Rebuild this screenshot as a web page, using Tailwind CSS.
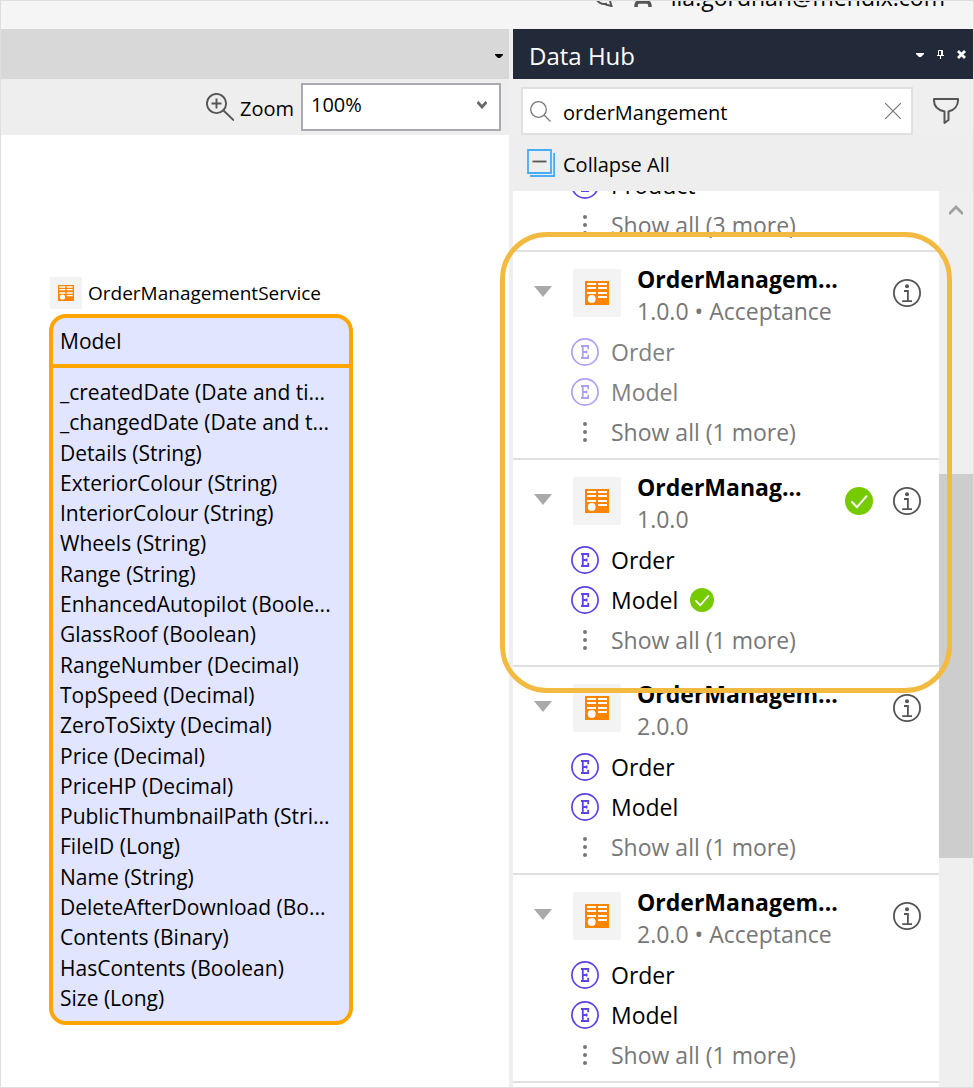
<!DOCTYPE html>
<html lang="en">
<head>
<meta charset="utf-8">
<meta name="viewport" content="width=device-width, initial-scale=1">
<title>Data Hub</title>
<script src="https://cdn.jsdelivr.net/npm/@tailwindcss/browser@4"></script>
</head>
<body class="flex h-screen flex-col overflow-hidden border border-[#dedede] bg-white font-['Open_Sans','Noto_Sans',sans-serif] text-black">

<!-- Shared icons -->
<svg class="hidden" aria-hidden="true">
  <symbol id="service" viewBox="0 0 24 24">
    <path fill="#ff8500" d="M0 0h24v24H0z"/>
    <path fill="#fff" d="M2 2h9v2H2zM13 2h9v2h-9zM2 6h9v2H2zM13 6h9v2h-9zM2 11h9v2H2zM13 11h9v2h-9zM13 15h9v2h-9z"/>
    <circle cx="6.7" cy="18" r="3.9" fill="#fff"/>
  </symbol>
  <symbol id="entity" viewBox="0 0 28 28">
    <circle cx="14" cy="14" r="13.1" fill="none" stroke="currentColor" stroke-width="1.7"/>
    <path fill="none" stroke="currentColor" stroke-width="1.8" d="M10 8h7.200v3.200M10 20h7.200v-3.200M11.800 8v12M12 14h4.200M15.600 12.400v3.200"/>
  </symbol>
  <symbol id="dots" viewBox="0 0 4 20">
    <circle cx="2" cy="2" r="2"/><circle cx="2" cy="10" r="2"/><circle cx="2" cy="18" r="2"/>
  </symbol>
  <symbol id="info" viewBox="0 0 28 28">
    <circle cx="14" cy="14" r="13.1" fill="none" stroke="currentColor" stroke-width="1.8"/>
    <circle cx="14" cy="7.2" r="2" fill="currentColor"/>
    <path fill="none" stroke="currentColor" stroke-width="1.8" d="M11 12h3.9v10M9.2 22.2h9.8"/>
  </symbol>
  <symbol id="check" viewBox="0 0 28 28">
    <circle cx="14" cy="14" r="14" fill="#76cb00"/>
    <path fill="none" stroke="#fff" stroke-width="2" stroke-linecap="round" stroke-linejoin="round" d="M7 15l5 5.2 9.5-11"/>
  </symbol>
  <symbol id="arrow" viewBox="0 0 18 11"><path fill="#a9a9a9" d="M0 0h18L9 11z"/></symbol>
  <symbol id="caret" viewBox="0 0 8 4"><path fill="currentColor" d="M0 0h8v1L5 4H3L0 1z"/></symbol>
</svg>

<header class="flex h-7 shrink-0 items-start justify-end overflow-hidden bg-[#f5f5f5] pr-7">
  <div class="-mt-5 flex items-center text-[23px] leading-8">
    <svg class="mr-[21px] h-5 w-[18px]" viewBox="0 0 18 20" fill="none" stroke="#555" stroke-width="2"><path d="M12 16.500A8 8 0 1 1 16.500 12M10.500 17.500l6 1.500-1.500-5"/></svg>
    <svg class="mr-[19px] h-5 w-[18px]" viewBox="0 0 18 20" fill="none" stroke="#555" stroke-width="3.500"><circle cx="9" cy="7" r="5"/><path d="M2 20c0-3 1-5 3-5h8c2 0 3 2 3 5"/></svg>
    <span>lia.gordhan@mendix.com</span>
  </div>
</header>

<div class="flex min-h-0 flex-1 bg-[#efefef]">

  <!-- Domain model canvas -->
  <main class="flex min-w-0 flex-1 flex-col bg-white">
    <div class="flex h-[50px] shrink-0 items-center justify-end bg-[#d8d8d8] pr-1.5">
      <button aria-label="Open documents" class="pt-1"><svg class="h-1 w-2"><use href="#caret"/></svg></button>
    </div>
    <div class="flex h-14 shrink-0 items-center justify-end bg-[#eee] pr-2">
      <svg class="mr-1.5 h-7 w-7" viewBox="0 0 28 28" fill="none" stroke="#555" stroke-width="1.9"><circle cx="10.500" cy="10.500" r="9.600"/><path d="M17.500 17.500L28 27.500M5.500 10.500h10M10.500 5.500v10"/></svg>
      <label for="zoom" class="mr-[7px] pt-1 text-xl">Zoom</label>
      <div class="relative">
        <select id="zoom" class="h-12 w-50 appearance-none border-2 border-[#a9a9b1] bg-white pb-1 pl-2 text-xl"><option>100%</option></select>
        <svg class="pointer-events-none absolute right-3.5 top-[18px] h-2 w-2.5" viewBox="0 0 10 8" fill="none" stroke="#666" stroke-width="2.800"><path d="M.5 1L5 6l4.500-5"/></svg>
      </div>
    </div>

    <div class="px-12 pt-[142px]">
      <div class="ml-px flex items-center gap-1.5">
        <span class="flex size-8 items-center justify-center bg-[#f3f3f3]"><svg class="size-4"><use href="#service"/></svg></span>
        <span class="text-[19px]">OrderManagementService</span>
      </div>
      <section class="mt-[5px] w-76 rounded-[17px] border-4 border-[#ffa500] bg-[#e1e5ff] text-[21px] leading-[30px]">
        <h2 class="border-b-4 border-[#ffa500] pb-2 pl-[7px] pt-2">Model</h2>
        <ul class="flex min-h-[653px] flex-col justify-between whitespace-nowrap pb-2 pl-[7px] pt-[9px]">
          <li>_createdDate (Date and ti...</li>
          <li>_changedDate (Date and t...</li>
          <li>Details (String)</li>
          <li>ExteriorColour (String)</li>
          <li>InteriorColour (String)</li>
          <li>Wheels (String)</li>
          <li>Range (String)</li>
          <li>EnhancedAutopilot (Boole...</li>
          <li>GlassRoof (Boolean)</li>
          <li>RangeNumber (Decimal)</li>
          <li>TopSpeed (Decimal)</li>
          <li>ZeroToSixty (Decimal)</li>
          <li>Price (Decimal)</li>
          <li>PriceHP (Decimal)</li>
          <li>PublicThumbnailPath (Stri...</li>
          <li>FileID (Long)</li>
          <li>Name (String)</li>
          <li>DeleteAfterDownload (Bo...</li>
          <li>Contents (Binary)</li>
          <li>HasContents (Boolean)</li>
          <li>Size (Long)</li>
        </ul>
      </section>
    </div>
  </main>

  <!-- Data Hub pane -->
  <aside class="ml-1 flex w-115 shrink-0 flex-col">
    <div class="flex h-[50px] shrink-0 items-center bg-[#222938] pl-4 pr-[7px] text-white">
      <h1 class="flex-1 pt-1 text-2xl">Data Hub</h1>
      <div class="flex items-center gap-3">
        <button aria-label="Window options" class="pt-0.5"><svg class="h-1 w-2"><use href="#caret"/></svg></button>
        <button aria-label="Pin"><svg class="h-[9px] w-[9px]" viewBox="0 0 7 9" fill="none" stroke="#fff"><path d="M1.500 5V.5h4V5M4.500.5V5M0 5.500h7M3.500 6v3"/></svg></button>
        <button aria-label="Close"><svg class="h-[9px] w-[9px]" viewBox="0 0 9 9" stroke="#fff" stroke-width="2.800"><path d="M1 1l7 7M8 1L1 8"/></svg></button>
      </div>
    </div>

    <div class="flex shrink-0 items-center gap-5 pl-2 pr-3.5 pt-2">
      <div class="flex h-12 min-w-0 flex-1 items-center border-2 border-[#e0e0e0] bg-white pl-[7px] pr-2.5">
        <svg class="h-[21px] w-[21px] shrink-0" viewBox="0 0 21 21" fill="none" stroke="#777" stroke-width="1.300"><circle cx="8.500" cy="8.500" r="7.800"/><path d="M14 14l6.500 6.500"/></svg>
        <input aria-label="Search" value="orderMangement" class="ml-3 min-w-0 flex-1 pt-1 text-xl outline-none">
        <button aria-label="Clear search"><svg class="h-4 w-4" viewBox="0 0 16 16" stroke="#777" stroke-width="1.200"><path d="M0 0l16 16M16 0L0 16"/></svg></button>
      </div>
      <button aria-label="Filter"><svg class="h-[26px] w-[26px]" viewBox="0 0 26 26" fill="none" stroke="#555" stroke-width="2" stroke-linejoin="round"><path d="M1 1h24v1.500C25 7.500 21.500 12 15.500 13.500v8.500l-4 3V13.500C4.500 12 1 7.500 1 2.500z"/></svg></button>
    </div>

    <div class="flex h-14 shrink-0 items-center bg-[#eee] pl-3.5">
      <button class="flex items-center gap-2 text-xl">
        <svg class="h-7 w-7" viewBox="0 0 28 28" fill="none" stroke="#45acf5" stroke-width="1.800"><path d="M1 1h23v23H1zM27.100 4v23H3"/><path stroke="#555" d="M5.500 12.500h14"/></svg>
        <span class="pt-1">Collapse All</span>
      </button>
    </div>

    <div class="relative flex min-h-0 flex-1">
      <div class="min-w-0 flex-1 overflow-hidden bg-white text-[23px] leading-8">

        <section class="-mt-[26px] border-b-2 border-[#e0e0e0] pb-[5px]">
          <ul class="pl-[58px]">
            <li class="flex h-10 items-center gap-3"><svg class="size-7 text-[#5b43e9]"><use href="#entity"/></svg>Product</li>
            <li><button class="flex h-10 items-center gap-3 text-[#777]"><span class="flex w-7 justify-center"><svg class="h-5 w-1 fill-current"><use href="#dots"/></svg></span>Show all (3 more)</button></li>
          </ul>
        </section>

        <section class="border-b-2 border-[#e0e0e0] pb-1.5 pt-[11px]">
          <div class="flex pl-[21px] pr-[18px]">
            <button aria-label="Collapse" class="mr-[21px] mt-[23px] self-start"><svg class="h-[11px] w-[18px]"><use href="#arrow"/></svg></button>
            <span class="mr-4 mt-1.5 flex size-12 items-center justify-center rounded-xs bg-[#f3f3f3]"><svg class="size-6"><use href="#service"/></svg></span>
            <div class="flex-1"><h3 class="font-bold">OrderManagem...</h3><p class="text-[#777]">1.0.0 • Acceptance</p></div>
            <button aria-label="Details" class="mt-4 self-start text-[#555]"><svg class="size-7"><use href="#info"/></svg></button>
          </div>
          <ul class="pl-[58px] pt-[5px]">
            <li class="flex h-10 items-center gap-3 text-[#808080]"><svg class="size-7 text-[#ada1f4]"><use href="#entity"/></svg>Order</li>
            <li class="flex h-10 items-center gap-3 text-[#808080]"><svg class="size-7 text-[#ada1f4]"><use href="#entity"/></svg>Model</li>
            <li><button class="flex h-10 items-center gap-3 text-[#777]"><span class="flex w-7 justify-center"><svg class="h-5 w-1 fill-current"><use href="#dots"/></svg></span>Show all (1 more)</button></li>
          </ul>
        </section>

        <section class="border-b-2 border-[#e0e0e0] pb-[5px] pt-[11px]">
          <div class="flex pl-[21px] pr-[18px]">
            <button aria-label="Collapse" class="mr-[21px] mt-[23px] self-start"><svg class="h-[11px] w-[18px]"><use href="#arrow"/></svg></button>
            <span class="mr-4 mt-1.5 flex size-12 items-center justify-center rounded-xs bg-[#f3f3f3]"><svg class="size-6"><use href="#service"/></svg></span>
            <div class="flex-1"><h3 class="font-bold">OrderManag...</h3><p class="text-[#777]">1.0.0</p></div>
            <svg class="mr-5 mt-4 size-7" role="img" aria-label="In use"><use href="#check"/></svg>
            <button aria-label="Details" class="mt-4 self-start text-[#555]"><svg class="size-7"><use href="#info"/></svg></button>
          </div>
          <ul class="pl-[58px] pt-[5px]">
            <li class="flex h-10 items-center gap-3"><svg class="size-7 text-[#5b43e9]"><use href="#entity"/></svg>Order</li>
            <li class="flex h-10 items-center gap-3"><svg class="size-7 text-[#5b43e9]"><use href="#entity"/></svg>Model<svg class="size-6" role="img" aria-label="In use"><use href="#check"/></svg></li>
            <li><button class="flex h-10 items-center gap-3 text-[#777]"><span class="flex w-7 justify-center"><svg class="h-5 w-1 fill-current"><use href="#dots"/></svg></span>Show all (1 more)</button></li>
          </ul>
        </section>

        <section class="border-b-2 border-[#e0e0e0] pb-1.5 pt-[11px]">
          <div class="flex pl-[21px] pr-[18px]">
            <button aria-label="Collapse" class="mr-[21px] mt-[23px] self-start"><svg class="h-[11px] w-[18px]"><use href="#arrow"/></svg></button>
            <span class="mr-4 mt-1.5 flex size-12 items-center justify-center rounded-xs bg-[#f3f3f3]"><svg class="size-6"><use href="#service"/></svg></span>
            <div class="flex-1"><h3 class="font-bold">OrderManagem...</h3><p class="text-[#777]">2.0.0</p></div>
            <button aria-label="Details" class="mt-4 self-start text-[#555]"><svg class="size-7"><use href="#info"/></svg></button>
          </div>
          <ul class="pl-[58px] pt-[5px]">
            <li class="flex h-10 items-center gap-3"><svg class="size-7 text-[#5b43e9]"><use href="#entity"/></svg>Order</li>
            <li class="flex h-10 items-center gap-3"><svg class="size-7 text-[#5b43e9]"><use href="#entity"/></svg>Model</li>
            <li><button class="flex h-10 items-center gap-3 text-[#777]"><span class="flex w-7 justify-center"><svg class="h-5 w-1 fill-current"><use href="#dots"/></svg></span>Show all (1 more)</button></li>
          </ul>
        </section>

        <section class="border-b-2 border-[#e0e0e0] pb-1.5 pt-[11px]">
          <div class="flex pl-[21px] pr-[18px]">
            <button aria-label="Collapse" class="mr-[21px] mt-[23px] self-start"><svg class="h-[11px] w-[18px]"><use href="#arrow"/></svg></button>
            <span class="mr-4 mt-1.5 flex size-12 items-center justify-center rounded-xs bg-[#f3f3f3]"><svg class="size-6"><use href="#service"/></svg></span>
            <div class="flex-1"><h3 class="font-bold">OrderManagem...</h3><p class="text-[#777]">2.0.0 • Acceptance</p></div>
            <button aria-label="Details" class="mt-4 self-start text-[#555]"><svg class="size-7"><use href="#info"/></svg></button>
          </div>
          <ul class="pl-[58px] pt-[5px]">
            <li class="flex h-10 items-center gap-3"><svg class="size-7 text-[#5b43e9]"><use href="#entity"/></svg>Order</li>
            <li class="flex h-10 items-center gap-3"><svg class="size-7 text-[#5b43e9]"><use href="#entity"/></svg>Model</li>
            <li><button class="flex h-10 items-center gap-3 text-[#777]"><span class="flex w-7 justify-center"><svg class="h-5 w-1 fill-current"><use href="#dots"/></svg></span>Show all (1 more)</button></li>
          </ul>
        </section>
      </div>

      <!-- Scrollbar -->
      <div class="flex w-[34px] shrink-0 flex-col items-center bg-[#efefef] pt-3.5">
        <svg class="h-[10px] w-[14px]" viewBox="0 0 14 10" fill="none" stroke="#a0a0a0" stroke-width="2.800"><path d="M0 9l7-7 7 7"/></svg>
        <div class="mt-[259px] h-96 w-full bg-[#cdcdcd]"></div>
      </div>

      <!-- Highlight frame around the two 1.0.0 services -->
      <div class="pointer-events-none absolute -left-[13px] right-[21px] top-[41px] h-[461px] rounded-[47px] border-5 border-[#f3ba41]"></div>
    </div>
  </aside>
</div>
</body>
</html>
